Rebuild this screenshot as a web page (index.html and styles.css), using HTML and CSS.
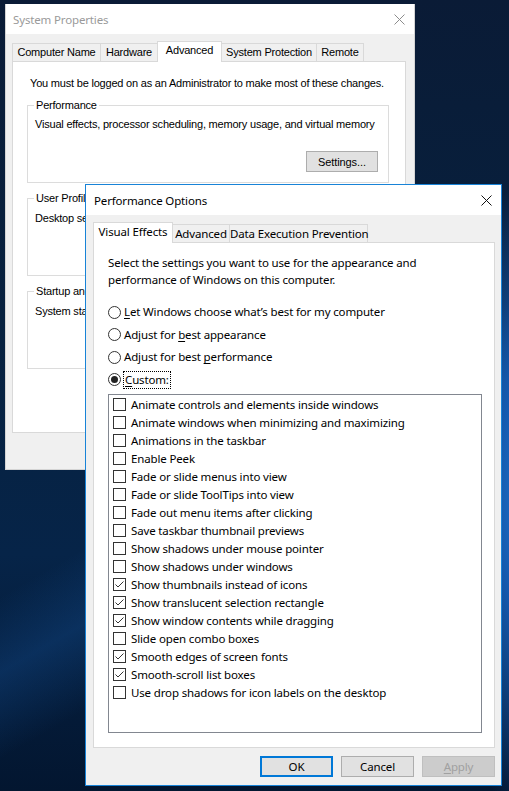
FILE: index.html
```html
<!DOCTYPE html>
<html>
<head>
<meta charset="utf-8">
<link rel="stylesheet" href="styles.css">
</head>
<body>
<div class="desktop">
  <div class="win sysprops">
    <div class="titlebar">
      <span class="title inactive">System Properties</span>
      <svg class="close" width="11" height="11" viewBox="0 0 11 11"><path d="M0.5 0.5L10.5 10.5M10.5 0.5L0.5 10.5" stroke="#8c8c8c" stroke-width="1" fill="none"/></svg>
    </div>
    <div class="winbody">
      <div class="tabs sp-tabs">
        <div class="tab w88">Computer Name</div>
        <div class="tab w57">Hardware</div>
        <div class="tab active w64">Advanced</div>
        <div class="tab w95">System Protection</div>
        <div class="tab w47">Remote</div>
      </div>
      <div class="panel sp-panel">
        <p class="note">You must be logged on as an Administrator to make most of these changes.</p>
        <fieldset class="group perf">
          <legend>Performance</legend>
          <p>Visual effects, processor scheduling, memory usage, and virtual memory</p>
          <div class="btnrow"><button class="btn sp-btn">Settings...</button></div>
        </fieldset>
        <fieldset class="group profiles">
          <legend>User Profiles</legend>
          <p>Desktop settings related to your sign-in</p>
        </fieldset>
        <fieldset class="group startup">
          <legend>Startup and Recovery</legend>
          <p>System startup, system failure, and debugging information</p>
        </fieldset>
      </div>
    </div>
  </div>

  <div class="win perfopts">
    <div class="titlebar po-titlebar">
      <span class="title">Performance Options</span>
      <svg class="close" width="11" height="11" viewBox="0 0 11 11"><path d="M0.5 0.5L10.5 10.5M10.5 0.5L0.5 10.5" stroke="#111" stroke-width="1" fill="none"/></svg>
    </div>
    <div class="winbody po-body">
      <div class="tabs po-tabs">
        <div class="tab active w79">Visual Effects</div>
        <div class="tab w57">Advanced</div>
        <div class="tab w138">Data Execution Prevention</div>
      </div>
      <div class="panel po-panel">
        <p class="intro">Select the settings you want to use for the appearance and performance of Windows on this computer.</p>
        <div class="radios">
          <div class="radio"><span class="rb"></span><span class="rl"><u>L</u>et Windows choose what’s best for my computer</span></div>
          <div class="radio"><span class="rb"></span><span class="rl">Adjust for <u>b</u>est appearance</span></div>
          <div class="radio"><span class="rb"></span><span class="rl">Adjust for best <u>p</u>erformance</span></div>
          <div class="radio"><span class="rb on"></span><span class="rl focus"><u>C</u>ustom:</span></div>
        </div>
        <div class="listbox">
          <div class="item"><span class="cb"></span>Animate controls and elements inside windows</div>
          <div class="item"><span class="cb"></span>Animate windows when minimizing and maximizing</div>
          <div class="item"><span class="cb"></span>Animations in the taskbar</div>
          <div class="item"><span class="cb"></span>Enable Peek</div>
          <div class="item"><span class="cb"></span>Fade or slide menus into view</div>
          <div class="item"><span class="cb"></span>Fade or slide ToolTips into view</div>
          <div class="item"><span class="cb"></span>Fade out menu items after clicking</div>
          <div class="item"><span class="cb"></span>Save taskbar thumbnail previews</div>
          <div class="item"><span class="cb"></span>Show shadows under mouse pointer</div>
          <div class="item"><span class="cb"></span>Show shadows under windows</div>
          <div class="item"><span class="cb"><svg viewBox="0 0 11 11" width="11" height="11"><path d="M1.5 5.5L4 8L9.5 2.5" stroke="#333" stroke-width="1" fill="none"/></svg></span>Show thumbnails instead of icons</div>
          <div class="item"><span class="cb"><svg viewBox="0 0 11 11" width="11" height="11"><path d="M1.5 5.5L4 8L9.5 2.5" stroke="#333" stroke-width="1" fill="none"/></svg></span>Show translucent selection rectangle</div>
          <div class="item"><span class="cb"><svg viewBox="0 0 11 11" width="11" height="11"><path d="M1.5 5.5L4 8L9.5 2.5" stroke="#333" stroke-width="1" fill="none"/></svg></span>Show window contents while dragging</div>
          <div class="item"><span class="cb"></span>Slide open combo boxes</div>
          <div class="item"><span class="cb"><svg viewBox="0 0 11 11" width="11" height="11"><path d="M1.5 5.5L4 8L9.5 2.5" stroke="#333" stroke-width="1" fill="none"/></svg></span>Smooth edges of screen fonts</div>
          <div class="item"><span class="cb"><svg viewBox="0 0 11 11" width="11" height="11"><path d="M1.5 5.5L4 8L9.5 2.5" stroke="#333" stroke-width="1" fill="none"/></svg></span>Smooth-scroll list boxes</div>
          <div class="item"><span class="cb"></span>Use drop shadows for icon labels on the desktop</div>
        </div>
      </div>
      <div class="buttons">
        <button class="btn default">OK</button>
        <button class="btn">Cancel</button>
        <button class="btn disabled"><u>A</u>pply</button>
      </div>
    </div>
  </div>
</div>
</body>
</html>
```

FILE: styles.css
```css
* { box-sizing: border-box; margin: 0; padding: 0; }
html, body { width: 509px; height: 791px; overflow: hidden; }
body {
  background:
    radial-gradient(ellipse 110px 330px at 545px 500px, rgba(40,140,235,0.95) 0%, rgba(25,105,205,0.75) 45%, rgba(10,60,130,0) 100%),
    linear-gradient(150deg, rgba(0,0,0,0) 0%, rgba(0,0,0,0) 55%, rgba(20,80,150,0.35) 62%, rgba(0,0,0,0) 70%),
    linear-gradient(to bottom, #0a1b36 0%, #07213f 40%, #062448 70%, #031630 100%);
  font-family: "Liberation Sans", Arial, sans-serif;
  color: #000;
}
.desktop { position: relative; width: 509px; height: 791px; }

.win { position: absolute; display: flex; flex-direction: column; background: #f0f0f0; }
.titlebar { display: flex; align-items: center; justify-content: space-between; background: #fff; flex: none; }
.title { font-family: "Noto Sans", "Open Sans", sans-serif; font-size: 11.5px; letter-spacing: -0.15px; }
.title.inactive { color: #9a9a9a; }

/* System Properties */
.sysprops { left: 5px; top: 4px; width: 410px; height: 466px; border: 1px solid #d4d4d4; border-top: 0; }
.sysprops .titlebar { height: 30px; padding: 0 9px 0 7px; }
.sysprops .winbody { padding: 7px 8px 0 6px; flex: 1; display: flex; flex-direction: column; font-size: 11px; letter-spacing: -0.2px; }

.tabs { display: flex; align-items: flex-end; position: relative; z-index: 1; }
.tab { background: #f0f0f0; border: 1px solid #d9d9d9; border-bottom: 0; margin-right: -1px; white-space: nowrap; text-align: center; }
.tab.active { background: #fff; margin-bottom: -1px; }
.w88 { width: 89px; } .w57 { width: 58px; } .w64 { width: 65px; } .w95 { width: 96px; } .w47 { width: 48px; }
.w79 { width: 80px; } .w138 { width: 139px; }

.sp-tabs { height: 20px; }
.sp-tabs .tab { height: 18px; line-height: 17px; }
.sp-tabs .tab.active { height: 21px; line-height: 16px; }

.panel { background: #fff; border: 1px solid #d9d9d9; }
.sp-panel { height: 372px; padding: 15px 4px 0 14px; }
.note { padding-left: 3px; line-height: 13px; white-space: nowrap; }
.group { border: 1px solid #dcdcdc; padding: 3px 7px 10px 7px; width: 362px; }
.group legend { padding: 0 2px; margin-left: -1px; line-height: 13px; }
.group p { line-height: 13px; white-space: nowrap; }
.perf { margin-top: 9px; }
.perf p { margin-top: 3px; }
.btnrow { display: flex; justify-content: flex-end; margin-top: 20px; padding-right: 3px; }
.profiles { margin-top: 9px; padding-bottom: 50px; }
.profiles p, .startup p { margin-top: 4px; }
.startup { margin-top: 9px; padding-bottom: 50px; }

.btn { font: inherit; background: #e1e1e1; border: 1px solid #adadad; color: #000; height: 21px; }
.sp-btn { width: 72px; height: 21px; font-family: "Liberation Sans", Arial, sans-serif; font-size: 11px; letter-spacing: -0.1px; }

/* Performance Options */
.perfopts { left: 85px; top: 184px; width: 417px; height: 602px; border: 1px solid #1883d7; font-family: "Noto Sans", "Open Sans", sans-serif; font-size: 11.5px; letter-spacing: -0.15px; }
.po-titlebar { height: 30px; padding: 0 9px 0 8px; }
.po-titlebar .title { color: #000; }
.po-body { padding: 7px 6px 0 7px; flex: 1; display: flex; flex-direction: column; }
.po-tabs { height: 20px; }
.po-tabs .tab { height: 18px; line-height: 17px; }
.po-tabs .tab.active { height: 21px; line-height: 17px; }

.po-panel { height: 506px; padding: 11px 13px 0 14px; }
.intro { line-height: 17px; width: 320px; }
.radios { margin-top: 14.5px; display: flex; flex-direction: column; gap: 3.67px; }
.radio { display: flex; align-items: center; height: 19px; }
.rb { width: 13px; height: 13px; border: 1px solid #333; border-radius: 50%; background: #fff; margin-right: 3px; display: flex; align-items: center; justify-content: center; flex: none; }
.rb.on::after { content: ""; width: 7px; height: 7px; border-radius: 50%; background: #222; }
.rl { line-height: 16px; }
.rl.focus { outline: 1px dotted #000; outline-offset: 0; padding: 0 1px; }

.listbox { margin-top: 4.5px; width: 374px; height: 339px; border: 1px solid #828790; background: #fff; padding: 1px 0 0 4px; }
.item { display: flex; align-items: center; height: 18px; white-space: nowrap; }
.cb { width: 13px; height: 13px; border: 1px solid #333; background: #fff; margin-right: 5px; flex: none; display: flex; align-items: center; justify-content: center; }
.cb svg { display: block; }

.buttons { display: flex; justify-content: flex-end; gap: 8px; margin-top: 8px; }
.buttons .btn { width: 73px; height: 21px; font-family: "Noto Sans", "Open Sans", sans-serif; font-size: 11.5px; letter-spacing: -0.15px; }
.btn.default { border: 2px solid #0078d7; }
.btn.disabled { background: #cccccc; border-color: #bfbfbf; color: #a0a0a0; }
u { text-decoration: underline; text-underline-offset: 2px; }
```
